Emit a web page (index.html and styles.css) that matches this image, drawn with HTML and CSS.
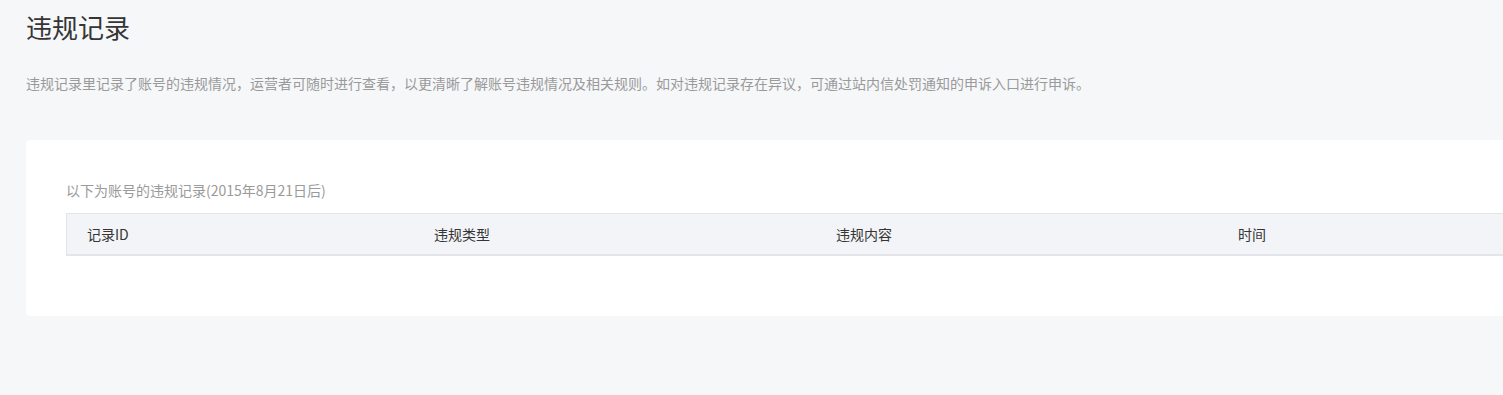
FILE: index.html
```html
<!DOCTYPE html>
<html>
<head>
<meta charset="utf-8">
<title>违规记录</title>
<link rel="stylesheet" href="styles.css">
</head>
<body>
	<div class="page">
		<h1 class="page_title">违规记录</h1>
		<p class="page_desc">违规记录里记录了账号的违规情况，运营者可随时进行查看，以更清晰了解账号违规情况及相关规则。如对违规记录存在异议，可通过站内信处罚通知的申诉入口进行申诉。</p>

		<div class="card">
			<div class="card_tips">以下为账号的违规记录(2015年8月21日后)</div>
			<table class="record_table">
				<thead>
					<tr>
						<th class="col_id">记录ID</th>
						<th class="col_type">违规类型</th>
						<th class="col_content">违规内容</th>
						<th class="col_time">时间</th>
					</tr>
				</thead>
				<tbody></tbody>
			</table>
		</div>
	</div>
</body>
</html>
```

FILE: styles.css
```css
html, body {
	margin: 0;
	padding: 0;
	background-color: #f6f7f9;
	overflow: hidden;
}

body {
	font-family: "Noto Sans CJK SC", "Noto Sans", sans-serif;
	color: #333;
}

.page {
	padding: 9px 0 0 26px;
}

.page_title {
	margin: 0;
	font-size: 26px;
	line-height: 36px;
	font-weight: normal;
	color: #353535;
}

.page_desc {
	margin: 28px 0 0;
	font-size: 14px;
	line-height: 20px;
	color: #9a9a9a;
	white-space: nowrap;
}

/* card runs on past the right edge of the window, so clip it there */
.card {
	margin-top: 47px;
	padding: 40px 0 60px 40px;
	background-color: #fff;
	border-radius: 4px 0 0 4px;
	overflow: hidden;
}

.card_tips {
	font-size: 14px;
	line-height: 20px;
	color: #9a9a9a;
}

.record_table {
	margin-top: 13px;
	border-collapse: collapse;
	table-layout: fixed;
	width: 1554px;
}

.record_table th {
	height: 40px;
	padding: 0 0 0 20px;
	text-align: left;
	font-size: 14px;
	font-weight: normal;
	color: #353535;
	background-color: #f3f4f7;
	border-top: 1px solid #e4e5ea;
	border-bottom: 2px solid #e4e5ea;
}

.record_table th.col_id {
	width: 327px;
	border-left: 1px solid #e4e5ea;
}

.record_table th.col_type,
.record_table th.col_content,
.record_table th.col_time {
	width: 382px;
}
```
